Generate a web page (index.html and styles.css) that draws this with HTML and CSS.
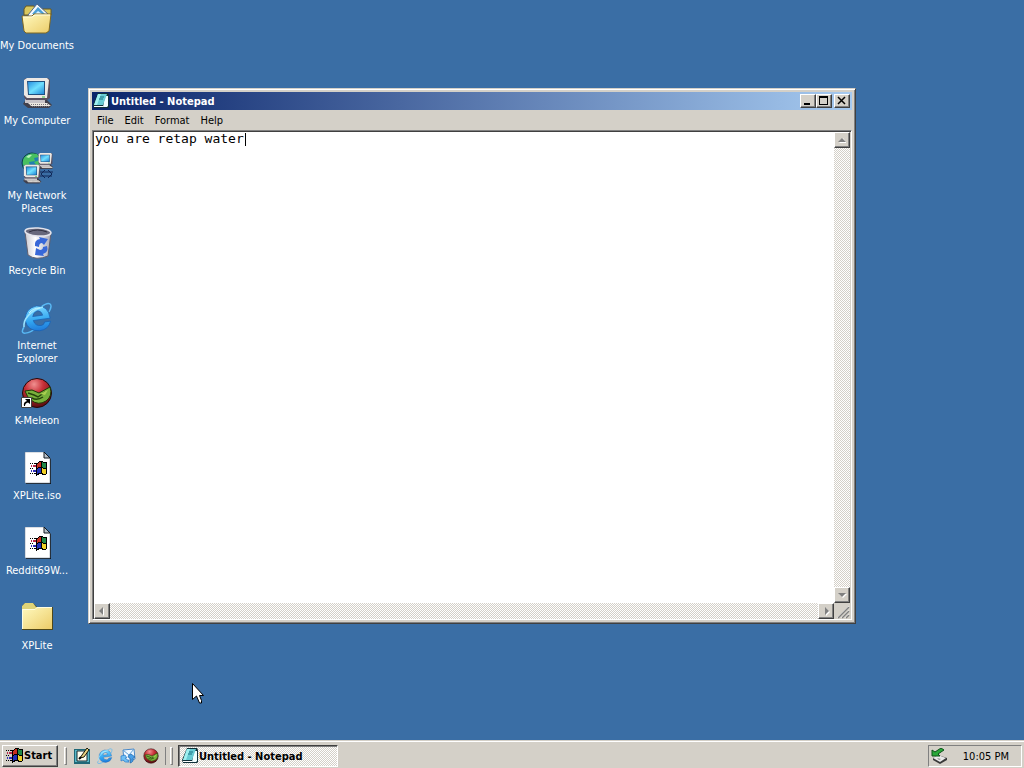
FILE: index.html
```
<!DOCTYPE html>
<html lang="en">
    <head>
        <title>Desktop</title>
        <meta charset="UTF-8">
        <meta name="viewport" content="width=device-width, initial-scale=1.0">
        <link rel="stylesheet" href="styles.css">
    </head>

    <body>

        <!-- shared drawings -->
        <svg class="defs" aria-hidden="true">
            <defs>
                <linearGradient id="folderFill" x1="0" y1="0" x2="1" y2="1">
                    <stop offset="0" stop-color="#fffac0"/><stop offset="1" stop-color="#eccc68"/>
                </linearGradient>
                <linearGradient id="screenFill" x1="0" y1="0" x2="1" y2="1">
                    <stop offset="0" stop-color="#2a90e0"/><stop offset=".5" stop-color="#70e0ff"/><stop offset="1" stop-color="#2088d8"/>
                </linearGradient>
                <linearGradient id="ieFill" x1="0" y1="0" x2="0" y2="1">
                    <stop offset="0" stop-color="#7cd8ff"/><stop offset=".6" stop-color="#30a4f0"/><stop offset="1" stop-color="#1f78d8"/>
                </linearGradient>
                <linearGradient id="binFill" x1="0" y1="0" x2="1" y2="0">
                    <stop offset="0" stop-color="#c8c8d0"/><stop offset=".4" stop-color="#ffffff"/><stop offset="1" stop-color="#a8a8b8"/>
                </linearGradient>
                <radialGradient id="redFill" cx=".4" cy=".2" r=".8">
                    <stop offset="0" stop-color="#f09090"/><stop offset=".4" stop-color="#c83038"/><stop offset="1" stop-color="#5c0c10"/>
                </radialGradient>
            </defs>
            <symbol id="flag" viewBox="0 0 17 15">
                <g shape-rendering="crispEdges">
                    <path d="M6 2H8V1H9V0H13V1H17V13H16V14H12V13H9V14H7V15H6Z" fill="#000"/>
                    <path d="M7 3H8V2H9V1H11V6H8V7H7Z" fill="#c83020"/>
                    <path d="M12 1H13V2H16V7H13V6H12Z" fill="#208848"/>
                    <path d="M7 8H8V7H11V12H8V13H7Z" fill="#2030b8"/>
                    <path d="M12 7H13V8H16V13H13V12H12Z" fill="#f0d028"/>
                    <path d="M3 4H6V6H3ZM1 4H2V6H1Z" fill="#b82848"/>
                    <path d="M3 9H6V11H3ZM1 9H2V11H1Z" fill="#3030b8"/>
                    <path d="M0 2H1V3H0ZM2 2H3V3H2ZM4 2H6V3H4ZM0 7H1V8H0ZM2 7H3V8H2ZM0 12H1V13H0ZM2 12H3V13H2ZM4 12H6V13H4Z" fill="#000"/>
                </g>
            </symbol>
            <symbol id="notepad" viewBox="0 0 16 16">
                <path d="M5 0H15L16 2V14L15 15H1L0 12Z" fill="#103038"/>
                <path d="M12 3H15V13L14 14H10Z" fill="#f0ffff"/>
                <path d="M5 1H14L10 12H1Z" fill="#68ccd4"/>
                <path d="M5 1H8L4 12H1Z" fill="#a0f0f0"/>
                <path d="M7 4H11M6 6H10" stroke="#187080"/>
                <path d="M1 13.500H10" stroke="#fff"/>
            </symbol>
            <symbol id="ie" viewBox="0 0 32 32">
                <path d="M3 25C-3 35 9 31 15 26M20 5C28-1 33 1 28 10" fill="none" stroke="#58b8f4" stroke-width="1.500"/>
                <path d="M29 18H12Q13 24 19 24Q22 24 23 21H29Q26 29 17 29Q5 28 4 17Q5 5 17 4Q29 5 29 18ZM12 14H22Q21 9 17 9Q13 10 12 14Z" fill="url(#ieFill)" stroke="#1760b4" stroke-width=".7" fill-rule="evenodd" transform="rotate(-8 16 16)"/>
                <path d="M3 25C2 17 10 8 22 5" fill="none" stroke="#9be4ff" stroke-width="1.500"/>
                <path d="M8 11Q12 6 19 6" fill="none" stroke="#c4f2ff"/>
            </symbol>
            <symbol id="melon" viewBox="0 0 32 32">
                <circle cx="16" cy="16" r="14.500" fill="url(#redFill)" stroke="#240808"/>
                <path d="M4 14L11 13L18 16L29 10Q32 19 25 24Q17 29 10 23Q6 20 4 14Z" fill="#78b03c" stroke="#203808"/>
                <path d="M7 16L13 18L17 20L24 15M11 21Q16 24 22 20" fill="none" stroke="#24440c" stroke-width="1.500"/>
                <path d="M19 17L27 13L24 18Z" fill="#a8d050"/>
            </symbol>
            <symbol id="pc" viewBox="0 0 32 32">
                <path d="M5 22H25L31 28L28 31H7L2 27Z" fill="#40404c"/>
                <path d="M4 22H24V26H4Z" fill="#c8c4c8"/>
                <path d="M7 26H26L30 29H10Z" fill="#ece8e0"/>
                <path d="M8 27.500H27M11 29.500H29" stroke="#78747c" stroke-dasharray="1 1"/>
                <path d="M3 2L7 1H27L29 3V21L26 23H5L3 20Z" fill="#585060"/>
                <path d="M3 3L6 1H26L28 3L26 21H6L3 18Z" fill="#ece8e4"/>
                <path d="M6 4H24V18H7Z" fill="#205080"/>
                <path d="M7 5H23V17H8Z" fill="url(#screenFill)"/>
                <path d="M21 20H24" stroke="#40c040"/>
            </symbol>
            <symbol id="file" viewBox="0 0 32 32">
                <path d="M5 1H24L30 7V32H5Z" fill="#101820"/>
                <path d="M4 0H23L29 6V31H4Z" fill="#fff" stroke="#68788c" stroke-width=".5"/>
                <path d="M23 0V6H29Z" fill="#b8c0c8" stroke="#101820"/>
                <use href="#flag" x="9" y="9" width="17" height="15"/>
            </symbol>
        </svg>

        <main class="desktop">

            <nav class="icons">
                <a class="icon" href="#">
                    <svg viewBox="0 0 32 32">
                        <path d="M3 7L5 4H13L15 7H30V13H3Z" fill="#d8c860" stroke="#685820"/>
                        <path d="M7 13L16 2L28 13V21H9Z" fill="#f4faff" stroke="#506890"/>
                        <path d="M11 12L17 5L24 12Z" fill="#4aa0d8"/>
                        <path d="M14 12L17 9L21 12Z" fill="#d8f0ff"/>
                        <path d="M1 14H11L13 12H30L28 29L25 31H5L3 29Z" fill="url(#folderFill)" stroke="#806820"/>
                        <path d="M2 15H11L14 13H29" fill="none" stroke="#fffde0"/>
                    </svg>
                    <span>My Documents</span>
                </a>
                <a class="icon" href="#">
                    <svg viewBox="0 0 32 32"><use href="#pc"/></svg>
                    <span>My Computer</span>
                </a>
                <a class="icon" href="#">
                    <svg viewBox="0 0 32 32">
                        <circle cx="11" cy="11" r="10" fill="#2080b0" stroke="#104840"/>
                        <path d="M3 6Q8 0 16 2L18 5L13 6L14 9L8 10L9 14L5 17Q0 12 3 6ZM13 10L19 8L20 15L16 14Z" fill="#48c060"/>
                        <path d="M5 5Q8 2 11 3L8 6Z" fill="#b8f4b8"/>
                        <path d="M19 20H32M19 24H31M24 18L20 22L24 26M27 18L31 22L27 26" fill="none" stroke="#102858"/>
                        <use href="#pc" x="16" y="0" width="17" height="18"/>
                        <use href="#pc" x="1" y="12" width="20" height="20"/>
                    </svg>
                    <span>My Network Places</span>
                </a>
                <a class="icon" href="#">
                    <svg viewBox="0 0 32 32">
                        <path d="M4 5L7 28Q15 34 27 29L30 6Z" fill="url(#binFill)" stroke="#606070"/>
                        <ellipse cx="17" cy="5" rx="13" ry="4" fill="#68687c" stroke="#e4e4ec" stroke-width="1.500" transform="rotate(4 17 5)"/>
                        <path d="M8 5Q16 1 26 5" fill="none" stroke="#303040"/>
                        <path d="M14 19Q13 13 19 12L18 10L27 12L23 18L21 16Q18 16 18 20ZM26 19Q28 25 22 27L23 29L14 28L15 21L19 23Q22 23 22 20Z" fill="#3868d8"/>
                    </svg>
                    <span>Recycle Bin</span>
                </a>
                <a class="icon" href="#">
                    <svg viewBox="0 0 32 32"><use href="#ie"/></svg>
                    <span>Internet Explorer</span>
                </a>
                <a class="icon" href="#">
                    <svg viewBox="0 0 32 32">
                        <use href="#melon"/>
                        <path d="M.5 20.500H10.500V30.500H.5Z" fill="#fff" stroke="#404040"/>
                        <path d="M3 29Q2 25 6 24L4 22H9V27L7 25.500Q4 26 4 29Z" fill="#000"/>
                    </svg>
                    <span>K-Meleon</span>
                </a>
                <a class="icon" href="#">
                    <svg viewBox="0 0 32 32"><use href="#file"/></svg>
                    <span>XPLite.iso</span>
                </a>
                <a class="icon" href="#">
                    <svg viewBox="0 0 32 32"><use href="#file"/></svg>
                    <span>Reddit69W...</span>
                </a>
                <a class="icon" href="#">
                    <svg viewBox="0 0 32 32">
                        <path d="M1 4L4 1H12L16 5H32V28H1Z" fill="#504818"/>
                        <path d="M1 4L4 1H12L15 5H31V27H1Z" fill="#e0d478"/>
                        <path d="M1 7H14L16 5H31V27H1Z" fill="url(#folderFill)"/>
                        <path d="M1.500 27V7.500H14L16 5.500H31" fill="none" stroke="#fffde0"/>
                    </svg>
                    <span>XPLite</span>
                </a>
            </nav>

            <section class="window">
                <header class="titlebar">
                    <svg class="small"><use href="#notepad"/></svg>
                    <h1>Untitled - Notepad</h1>
                    <div class="controls">
                        <button class="raised" aria-label="Minimize"><svg viewBox="0 0 12 10"><path d="M2 7H8V9H2Z"/></svg></button>
                        <button class="raised" aria-label="Maximize"><svg viewBox="0 0 12 10"><path d="M1 0H10V9H1ZM2 2V8H9V2Z" fill-rule="evenodd"/></svg></button>
                        <button class="raised close" aria-label="Close"><svg viewBox="0 0 12 10"><path d="M2 1L9 8M9 1L2 8" stroke="#000" stroke-width="1.500"/></svg></button>
                    </div>
                </header>
                <div class="menubar">
                    <button>File</button>
                    <button>Edit</button>
                    <button>Format</button>
                    <button>Help</button>
                </div>
                <div class="editor">
                    <div class="page">
                        <textarea aria-label="Text" spellcheck="false">you are retap water</textarea>
                        <span class="caret"></span>
                    </div>
                    <div class="scroll vertical">
                        <button class="raised" aria-label="Scroll up"><svg viewBox="0 0 12 12"><path class="lit" d="M3 8L7 4L10 8V9H4Z"/><path d="M2 8L6 4L10 8Z"/></svg></button>
                        <button class="raised" aria-label="Scroll down"><svg viewBox="0 0 12 12"><path class="lit" d="M3 5H11L7 9Z"/><path d="M2 4H10L6 8Z"/></svg></button>
                    </div>
                    <div class="scroll horizontal">
                        <button class="raised" aria-label="Scroll left"><svg viewBox="0 0 12 12"><path class="lit" d="M8 3V11L4 7Z"/><path d="M7 2V10L3 6Z"/></svg></button>
                        <button class="raised" aria-label="Scroll right"><svg viewBox="0 0 12 12"><path class="lit" d="M6 3V11L10 7Z"/><path d="M5 2V10L9 6Z"/></svg></button>
                    </div>
                    <svg class="sizer" viewBox="0 0 16 16">
                        <path d="M3 15L15 3M7 15L15 7M11 15L15 11" stroke="#fff"/>
                        <path d="M4 15L15 4M8 15L15 8M12 15L15 12" stroke="#808080" stroke-width="1.500"/>
                    </svg>
                </div>
            </section>

            <svg class="pointer" viewBox="0 0 12 21">
                <path d="M.5 .5V16.500L4.500 13L7.500 20H9.500V17.500L7.500 12.500H11.500Z" fill="#fff" stroke="#000"/>
            </svg>

        </main>

        <footer class="taskbar">
            <button class="start raised"><svg><use href="#flag"/></svg>Start</button>
            <span class="grip"></span>
            <div class="quick">
                <button aria-label="Show Desktop">
                    <svg class="small" viewBox="0 0 16 16">
                        <path d="M0 1H16V16H0Z" fill="#206878"/>
                        <path d="M1 2H15V14H1Z" fill="#58b8c8"/>
                        <path d="M3 3H13V13H3Z" fill="#fffff0" stroke="#182830"/>
                        <path d="M6 10L8 7L13 0L15 2L10 9Z" fill="#e8d080" stroke="#181808"/>
                        <path d="M5 11L7 9" stroke="#000" stroke-width="2"/>
                    </svg>
                </button>
                <button aria-label="Internet Explorer"><svg class="small"><use href="#ie"/></svg></button>
                <button aria-label="Outlook Express">
                    <svg class="small" viewBox="0 0 16 16">
                        <path d="M3 2L14 1L15 11L4 13Z" fill="#f0f8ff" stroke="#4888c8"/>
                        <path d="M3 2L9 7L14 1" fill="none" stroke="#60a0d8"/>
                        <path d="M5 7L1 8V13L3 12Q5 15 9 14L8 12Q6 12 5 10L7 10Z" fill="#70c0f4" stroke="#2878c8" stroke-width=".7"/>
                        <path d="M8 8L11 6L15 9L13 10Q14 14 10 15L11 11L9 10Z" fill="#48a0e8" stroke="#1860a8" stroke-width=".7"/>
                    </svg>
                </button>
                <button aria-label="K-Meleon"><svg class="small"><use href="#melon"/></svg></button>
            </div>
            <span class="grip double"></span>
            <button class="task"><svg class="small"><use href="#notepad"/></svg>Untitled - Notepad</button>
            <div class="tray">
                <svg class="small" viewBox="0 0 16 16">
                    <path d="M2 10L7 7L16 10V12L9 16L2 12Z" fill="#383838"/>
                    <path d="M2 10L7 7L15 10L9 14Z" fill="#e8e8e8"/>
                    <path d="M6 10L10 11L8 12Z" fill="#888"/>
                    <path d="M1 2L4 4L10 0L13 2L7 6L9 8L1 8Z" fill="#28a838" stroke="#0c5018"/>
                </svg>
                <time>10:05 PM</time>
            </div>
        </footer>

    </body>
</html>
```
FILE: styles.css
```
* { box-sizing: border-box; }

body {
    display: flex;
    flex-direction: column;
    height: 100vh;
    margin: 0;
    overflow: hidden;
    background: #3a6ea5;
    font: 11px/13px "DejaVu Sans Condensed", "DejaVu Sans", sans-serif;
    color: black;
}

button {
    display: flex;
    align-items: center;
    margin: 0;
    padding: 0;
    border: 0;
    background: none;
    font: inherit;
    color: inherit;
}

svg { display: block; flex: none; }

.defs { position: absolute; width: 0; height: 0; }
.small { width: 16px; height: 16px; }

.raised {
    background: #d4d0c8;
    border: 1px solid;
    border-color: white #404040 #404040 white;
    box-shadow: inset -1px -1px #808080;
}

/* desktop */

.desktop {
    position: relative;
    flex: 1;
    min-height: 0;
}

.icons {
    display: grid;
    grid-template-columns: 74px;
    grid-auto-rows: 75px;
}

.icon {
    display: flex;
    flex-direction: column;
    align-items: center;
    gap: 5px;
    padding-top: 2px;
    color: white;
    text-align: center;
    text-decoration: none;
}

.icon svg { width: 32px; height: 32px; }

.icon span {
    width: max-content;
    max-width: 80px;
}

.pointer {
    position: absolute;
    left: 192px;
    top: 683px;
    width: 12px;
    height: 21px;
}

/* notepad */

.window {
    position: absolute;
    left: 88px;
    top: 88px;
    display: flex;
    flex-direction: column;
    width: 768px;
    height: 536px;
    padding: 3px;
    background: #d4d0c8;
    border: 1px solid;
    border-color: #d4d0c8 #404040 #404040 #d4d0c8;
    box-shadow: inset 1px 1px white, inset -1px -1px #808080;
}

.titlebar {
    display: flex;
    align-items: center;
    gap: 2px;
    height: 18px;
    padding: 0 2px 0 1px;
    background: linear-gradient(to right, #0a246a, #a6caf0);
    color: white;
}

.titlebar h1,
.start,
.task {
    margin: 0;
    font: bold 11px/13px "DejaVu Sans Condensed", "DejaVu Sans", sans-serif;
}

.controls {
    display: flex;
    margin-left: auto;
}

.controls button {
    width: 16px;
    height: 14px;
    padding: 1px;
}

.controls svg { width: 12px; height: 10px; }
.controls .close { margin-left: 2px; }

.menubar {
    display: flex;
    height: 20px;
}

.menubar button { padding: 1px 6px 0 5px; }

.editor {
    display: grid;
    grid-template: 1fr 16px / 1fr 16px;
    flex: 1;
    border: 1px solid;
    border-color: #808080 white white #808080;
    box-shadow: inset 1px 1px #404040;
    padding: 1px 1px 0 1px;
}

.page {
    position: relative;
    font: 13px/14px "DejaVu Sans Mono", monospace;
}

.page textarea {
    display: block;
    width: 100%;
    height: 100%;
    padding: 0 1px;
    border: 0;
    outline: 0;
    resize: none;
    overflow: hidden;
    background: white;
    font: inherit;
}

.caret {
    position: absolute;
    left: calc(19ch + 2px);
    top: 1px;
    width: 1px;
    height: 13px;
    background: black;
}

.scroll,
.task {
    background: repeating-conic-gradient(white 0 25%, #d4d0c8 0 50%) 0 0 / 2px 2px;
}

.scroll {
    display: flex;
    justify-content: space-between;
}

.vertical { flex-direction: column; }

.scroll button {
    width: 16px;
    height: 16px;
    padding: 1px;
}

.scroll svg {
    width: 12px;
    height: 12px;
    fill: #808080;
}

.scroll .lit { fill: white; }
.sizer { width: 16px; height: 16px; }

/* taskbar */

.taskbar {
    display: flex;
    align-items: center;
    height: 28px;
    padding: 2px 2px 0;
    background: #d4d0c8;
    border-top: 1px solid #d4d0c8;
    box-shadow: inset 0 1px white;
}

.start {
    gap: 1px;
    width: 56px;
    height: 22px;
    padding: 0 3px;
}

.start svg { width: 17px; height: 15px; }

.grip {
    width: 3px;
    height: 18px;
    margin: 0 7px 0 6px;
    border: 1px solid;
    border-color: white #808080 #808080 white;
}

.double {
    margin: 0 5px 0 11px;
    box-shadow: -4px 0 #d4d0c8, -5px 0 #808080;
}

.quick {
    display: flex;
    gap: 7px;
}

.task {
    gap: 1px;
    width: 160px;
    height: 22px;
    padding: 1px 3px 0;
    border: 1px solid;
    border-color: #404040 white white #404040;
    box-shadow: inset 1px 1px #808080;
}

.tray {
    display: flex;
    align-items: center;
    justify-content: space-between;
    width: 94px;
    height: 22px;
    margin-left: auto;
    padding: 0 12px 0 2px;
    border: 1px solid;
    border-color: #808080 white white #808080;
}

.tray time { padding-top: 2px; }
```
